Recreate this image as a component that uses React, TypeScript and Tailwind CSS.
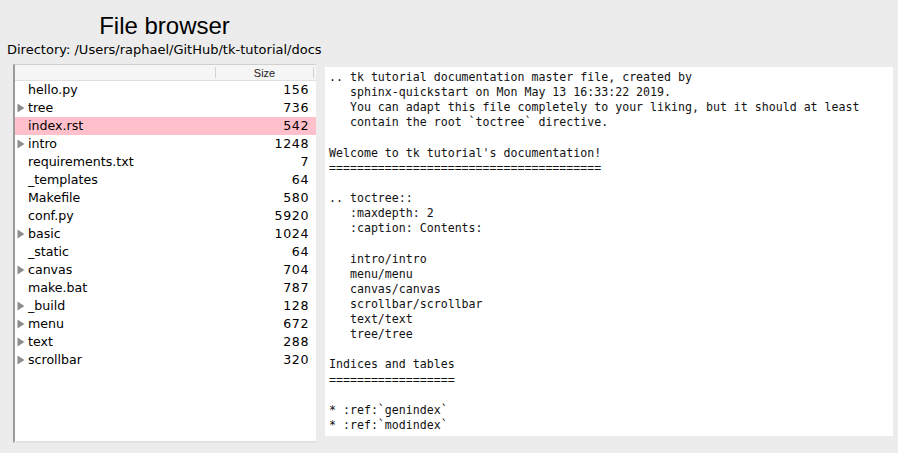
import React from 'react';

type Entry = { name: string; size: number; folder?: boolean };

const entries: Entry[] = [
  { name: 'hello.py', size: 156 },
  { name: 'tree', size: 736, folder: true },
  { name: 'index.rst', size: 542 },
  { name: 'intro', size: 1248, folder: true },
  { name: 'requirements.txt', size: 7 },
  { name: '_templates', size: 64 },
  { name: 'Makefile', size: 580 },
  { name: 'conf.py', size: 5920 },
  { name: 'basic', size: 1024, folder: true },
  { name: '_static', size: 64 },
  { name: 'canvas', size: 704, folder: true },
  { name: 'make.bat', size: 787 },
  { name: '_build', size: 128, folder: true },
  { name: 'menu', size: 672, folder: true },
  { name: 'text', size: 288, folder: true },
  { name: 'scrollbar', size: 320, folder: true },
];

const selected = 'index.rst';

const doc = `.. tk tutorial documentation master file, created by
   sphinx-quickstart on Mon May 13 16:33:22 2019.
   You can adapt this file completely to your liking, but it should at least
   contain the root \`toctree\` directive.

Welcome to tk tutorial's documentation!
=======================================

.. toctree::
   :maxdepth: 2
   :caption: Contents:

   intro/intro
   menu/menu
   canvas/canvas
   scrollbar/scrollbar
   text/text
   tree/tree

Indices and tables
==================

* :ref:\`genindex\`
* :ref:\`modindex\``;

const Arrow = () => (
  <svg width="8" height="10" viewBox="0 0 8 10" className="shrink-0">
    <path d="M0.5 0.5 L7.5 5 L0.5 9.5 Z" fill="#8d8d8d" />
  </svg>
);

export default function App() {
  return (
    <div className="w-[898px] h-[453px] bg-[#ececec] overflow-hidden font-['DejaVu_Sans',sans-serif] text-black">
      <div className="flex">
        {/* left column */}
        <div className="w-[315px] ml-[7px] flex flex-col">
          <div className="pt-[12px] h-[40px] text-center text-[24px] leading-[28px] font-['Liberation_Sans',Arial,sans-serif]">
            File browser
          </div>
          <div className="mt-[2px] text-[13px] leading-[16px] whitespace-nowrap">
            Directory: /Users/raphael/GitHub/tk-tutorial/docs
          </div>
          <div className="mt-[6px] ml-[6px] w-[303px] h-[379px] bg-white border-l-2 border-l-[#9b9b9b] border-t border-t-[#cfcfcf] border-b-2 border-b-[#e2e2e2] flex flex-col">
            <div className="h-[16px] shrink-0 bg-[#f5f5f5] border-b border-[#e0e0e0] flex items-center text-[11px] leading-[14px] text-[#222] font-['Liberation_Sans',Arial,sans-serif]">
              <div className="w-[200px]" />
              <div className="w-px h-[11px] bg-[#d2d2d2]" />
              <div className="w-[97px] text-center">Size</div>
              <div className="w-px h-[11px] bg-[#d2d2d2]" />
            </div>
            <div className="flex flex-col">
              {entries.map((e) => (
                <div
                  key={e.name}
                  className={`h-[18px] flex items-center text-[12.6px] leading-[18px] ${e.name === selected ? 'bg-[#ffc0cb]' : ''}`}
                >
                  <div className="w-[13px] pl-[2px] flex items-center">{e.folder && <Arrow />}</div>
                  <div className="flex-1">{e.name}</div>
                  <div className="pr-[7px] text-right tracking-[0.6px]">{e.size}</div>
                </div>
              ))}
            </div>
          </div>
        </div>
        {/* right column */}
        <div className="ml-[3px] pt-[67px]">
          <pre className="w-[568px] h-[369px] bg-white pl-[4px] pt-[3px] font-['DejaVu_Sans_Mono',monospace] text-[11.6px] leading-[15.13px] text-[#111] whitespace-pre">
            {doc}
          </pre>
        </div>
      </div>
    </div>
  );
}
